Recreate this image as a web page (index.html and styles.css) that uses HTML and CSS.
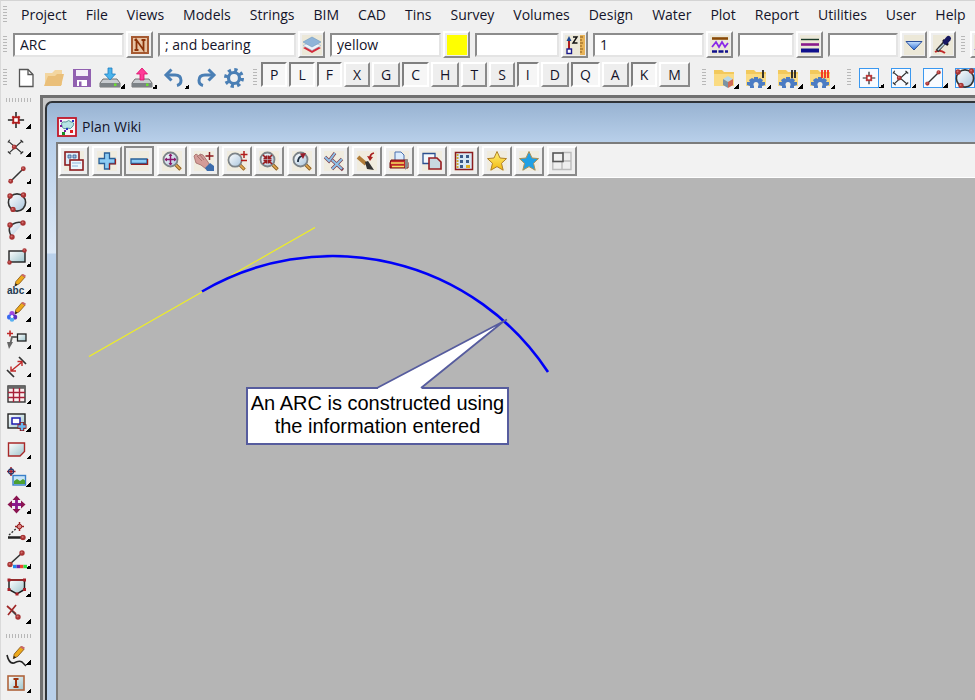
FILE: index.html
```html
<!DOCTYPE html>
<html lang="en">
<head>
<meta charset="utf-8">
<title>Plan Wiki</title>
<link rel="stylesheet" href="styles.css">
</head>
<body>
<svg class="defs" aria-hidden="true">
  <defs>
    <linearGradient id="glass" x1="0" y1="0" x2="1" y2="1"><stop offset="0" stop-color="#fff"/><stop offset="1" stop-color="#a8c4dc"/></linearGradient>
    <linearGradient id="teal" x1="0" y1="0" x2="1" y2="1"><stop offset="0" stop-color="#fff"/><stop offset="1" stop-color="#9cc4cc"/></linearGradient>
    <linearGradient id="gold" x1="0" y1="0" x2="0" y2="1"><stop offset="0" stop-color="#fff27a"/><stop offset="1" stop-color="#f2b80c"/></linearGradient>
    <linearGradient id="blue" x1="0" y1="0" x2="0" y2="1"><stop offset="0" stop-color="#c8e2ff"/><stop offset="1" stop-color="#2c6fd8"/></linearGradient>
    <symbol id="ball" viewBox="0 0 6 6"><circle cx="3" cy="3" r="2.700" fill="#a83434"/><circle cx="2.600" cy="2.400" r="1" fill="#d07070"/></symbol>
    <symbol id="lens" viewBox="0 0 20 20"><path d="M13 13l5.500 5.500" stroke="#8a5a20" stroke-width="3.400"/><path d="M13 13l5 5" stroke="#e0a850" stroke-width="1.700"/><circle cx="8.500" cy="8.500" r="7" fill="url(#glass)" stroke="#7c8388" stroke-width="1.800"/></symbol>
    <symbol id="folder" viewBox="0 0 20 20"><path d="M0 2h8l2 2h10v14H0z" fill="#f2c95c"/><path d="M0 6h20v12H0z" fill="#fadb82"/></symbol>
    <symbol id="cog" viewBox="0 0 20 20"><circle cx="10" cy="10" r="8" fill="none" stroke="currentColor" stroke-width="4" stroke-dasharray="3.142 3.141"/><circle cx="10" cy="10" r="5.500" fill="none" stroke="currentColor" stroke-width="3.200"/></symbol>
    <symbol id="foldercog" viewBox="0 0 20 20"><use href="#folder"/><path d="M1 17v-3h3l-1-2 3-2 2 1V9h4v2l2-1 3 2-1 2h3v3l-3 1v2h-4v-2q-2-3-4 0v2H4v-2z" fill="#4b7cc4"/><circle cx="10" cy="16.500" r="2.500" fill="#f4f0e4"/></symbol>
    <symbol id="star" viewBox="0 0 20 20"><path d="M10 .5l3 6.500 6.500.6-5 4.700 1.700 6.900L10 15.600l-6.200 3.600 1.700-6.900-5-4.700L7 7z"/></symbol>
    <symbol id="pencil" viewBox="0 0 20 20"><path d="M7 14l1-5 7-8 4 2.500-7 8z" fill="#eda91a" stroke="#8a5a18"/><path d="M14.500 1.500l1.500-2 4 2.500-1.500 2z" fill="#c86a6a"/><path d="M7 14.500l.6-3.500 2.600 1.600z" fill="#222"/></symbol>
    <symbol id="point" viewBox="0 0 20 20"><path d="M10 1v18M1 10h18" stroke="#222" stroke-width="1.700"/><path d="M6 8V6h2m4 0h2v2m0 4v2h-2m-4 0H6v-2" fill="none" stroke="#c22"/><rect x="7" y="7" width="6" height="6" fill="#fff" stroke="#b01c1c" stroke-width="2"/></symbol>
    <symbol id="crossing" viewBox="0 0 20 20"><path d="M2 4l15 13M3 16L17 3M1 5l2-3M15 2l3 3M1 15l3 3M15 18l3-3" fill="none" stroke="#333" stroke-width="1.300"/><use href="#ball" x="5" y="7" width="6" height="6"/></symbol>
    <symbol id="segment" viewBox="0 0 20 20"><path d="M3 17L17 3" stroke="#333" stroke-width="1.700"/><use href="#ball" x="0" y="14" width="6" height="6"/><use href="#ball" x="14" y="0" width="6" height="6"/></symbol>
    <symbol id="circle3" viewBox="0 0 20 20"><circle cx="10" cy="10.500" r="8.600" fill="url(#glass)" stroke="#333" stroke-width="1.600"/><use href="#ball" x="0" y="1" width="6" height="6"/><use href="#ball" x="13.500" y="0" width="6" height="6"/><use href="#ball" x="3" y="14.500" width="6" height="6"/></symbol>
  </defs>
</svg>

<header class="bars">
  <nav class="bar menu" aria-label="Main menu">
    <span class="grip"></span>
    <a href="#">Project</a><a href="#">File</a><a href="#">Views</a><a href="#">Models</a><a href="#">Strings</a><a href="#">BIM</a><a href="#">CAD</a><a href="#">Tins</a><a href="#">Survey</a><a href="#">Volumes</a><a href="#">Design</a><a href="#">Water</a><a href="#">Plot</a><a href="#">Report</a><a href="#">Utilities</a><a href="#">User</a><a href="#">Help</a>
  </nav>

  <div class="bar fields">
    <span class="grip"></span>
    <div class="field"><input class="w-l" type="text" value="ARC" aria-label="Name"><button class="raised" aria-label="Pick name"><svg viewBox="0 0 20 20"><rect x="2" y="2" width="16" height="16" fill="#e8c4a4" stroke="#a65a32" stroke-width="2"/><path d="M6.500 15V5l7 10V5M4.500 5H7M4.500 15h4M11.500 5h4" fill="none" stroke="#8c3208" stroke-width="1.800"/></svg></button></div>
    <div class="field"><input class="w-xl" type="text" value="; and bearing" aria-label="Model"><button class="raised" aria-label="Pick model"><svg viewBox="0 0 20 20"><rect width="20" height="20" fill="#ece8d8"/><path d="M1 13l9 5 9-5-9-4z" fill="#d42a3a"/><path d="M1 10.500l9 5 9-5-9-4z" fill="#eef4fa" stroke="#9ab4cc" stroke-width=".6"/><path d="M1 7l9 5 9-5-9-5z" fill="#8fb4d8" stroke="#6f98c0" stroke-width=".6"/></svg></button></div>
    <div class="field"><input class="w-l" type="text" value="yellow" aria-label="Colour"><button class="raised" aria-label="Pick colour"><span class="swatch"></span></button></div>
    <div class="field"><input class="w-m" type="text" aria-label="Height"><button class="raised" aria-label="Pick height"><svg viewBox="0 0 20 20"><rect width="20" height="20" fill="#ece8d8"/><path d="M4 15V4" stroke="#b01c1c" stroke-width="2"/><path d="M1.500 6L4 1l2.500 5z" fill="#234a90"/><rect x="2" y="14" width="4.500" height="4.500" fill="#fff" stroke="#1a1a8c" stroke-width="1.400"/><path d="M8 2h4L8 8h4.500" fill="none" stroke="#111" stroke-width="1.400"/><rect x="15" width="5" height="20" fill="#e8b45a"/><path d="M15 2h3M15 5h2M15 8h3M15 11h2M15 14h3M15 17h2" stroke="#8a5a18"/></svg></button></div>
    <div class="field"><input class="w-l" type="text" value="1" aria-label="Style"><button class="raised" aria-label="Pick style"><svg viewBox="0 0 20 20"><rect width="20" height="20" fill="#ece8d8"/><path d="M2 3.500h16" stroke="#8a4a08" stroke-width="2.600"/><path d="M2 12l4-5 3 5 3-5 3 5 3-4" fill="none" stroke="#8a2ae8" stroke-width="1.800"/><path d="M2 16.500h16" stroke="#10108c" stroke-width="2.600" stroke-dasharray="5 1.500"/></svg></button></div>
    <div class="field"><input class="w-xs" type="text" aria-label="Weight"><button class="raised" aria-label="Pick weight"><svg viewBox="0 0 20 20"><rect width="20" height="20" fill="#ece8d8"/><path d="M1 4.500h18" stroke="#1a3a2a" stroke-width="1.400"/><path d="M1 9.500h18" stroke="#8a1a8c" stroke-width="2.600"/><path d="M1 15.500h18" stroke="#10108c" stroke-width="4"/></svg></button></div>
    <div class="field"><input class="w-s" type="text" aria-label="Tinable"><button class="raised" aria-label="Choose"><svg viewBox="0 0 20 20"><rect width="20" height="20" fill="#ece8d8"/><path d="M2 6.500h16L10 15z" fill="url(#blue)" stroke="#2a4f9c"/></svg></button><button class="raised" aria-label="Sample"><svg viewBox="0 0 20 20"><rect width="20" height="20" fill="#ece8d8"/><path d="M2 17q5-3 10 1" fill="none" stroke="#c02828" stroke-width="2"/><path d="M4 16l8-9" stroke="#333" stroke-width="3.500"/><path d="M5 15l7-7" stroke="#b8d4e4" stroke-width="1.500"/><path d="M10 5l5 5" stroke="#111" stroke-width="2.500"/><path d="M12.500 7l3-3.500" stroke="#181860" stroke-width="5" stroke-linecap="round"/></svg></button></div>
    <span class="grip"></span>
    <button class="raised" aria-label="Cross section"><svg viewBox="0 0 20 20"><rect width="20" height="20" fill="#ece8d8"/><path d="M0 15L8 4l4 11z" fill="#8a74d8"/></svg></button>
  </div>

  <div class="bar actions">
    <span class="grip"></span>
    <div class="files">
      <button class="flat" aria-label="New"><svg viewBox="0 0 20 20"><path d="M3.500 1.500H12l5 5v12H3.500z" fill="#fff" stroke="#555" stroke-width="1.300"/><path d="M12 1.500v5h5" fill="none" stroke="#555" stroke-width="1.300"/></svg></button>
      <button class="flat" aria-label="Open"><svg viewBox="0 0 20 20"><path d="M1 17V5h7l3-3h7v15z" fill="#f3d6a0"/><path d="M0 18L4 8h7l2-2h7l-3 12z" fill="#eabf79"/></svg></button>
      <button class="flat" aria-label="Save"><svg viewBox="0 0 20 20"><path d="M1 1h18v18H1z" fill="#9160b0"/><path d="M4 2h12v6H4z" fill="#f4eef8"/><path d="M5 12h10v6H5z" fill="#fff"/><path d="M7 13.500h2.500V18H7z" fill="#9160b0"/></svg></button>
      <button class="flat more" aria-label="Import"><svg viewBox="0 0 20 20"><path d="M3 11h14l3 4v4H0v-4z" fill="#c8ccd0" stroke="#555" stroke-width=".8"/><path d="M0 15h20v4H0z" fill="#7c8286"/><path d="M14 15.500h2.500V18H14z" fill="#6ae030"/><path d="M8 0h4v6h3.500L10 12 4.500 6H8z" fill="#4ab4ec" stroke="#1c7cc0" stroke-width=".8"/></svg></button>
      <button class="flat more" aria-label="Export"><svg viewBox="0 0 20 20"><path d="M3 11h14l3 4v4H0v-4z" fill="#c8ccd0" stroke="#555" stroke-width=".8"/><path d="M0 15h20v4H0z" fill="#7c8286"/><path d="M14 15.500h2.500V18H14z" fill="#6ae030"/><path d="M8 12h4V6h3.500L10 0 4.500 6H8z" fill="#ff3c98" stroke="#d80c68" stroke-width=".8"/></svg></button>
      <button class="flat more" aria-label="Undo"><svg viewBox="0 0 20 20"><path d="M4 7h7q6 0 6 5.500 0 4-4 5" fill="none" stroke="#4a7fb5" stroke-width="3"/><path d="M7.500 1.500L2 7l5.500 5.500" fill="none" stroke="#4a7fb5" stroke-width="3"/></svg></button>
      <button class="flat" aria-label="Redo"><svg viewBox="0 0 20 20"><path d="M16 7H9q-6 0-6 5.500 0 4 4 5" fill="none" stroke="#4a7fb5" stroke-width="3"/><path d="M12.500 1.500L18 7l-5.500 5.500" fill="none" stroke="#4a7fb5" stroke-width="3"/></svg></button>
      <button class="flat gear" aria-label="Settings"><svg viewBox="0 0 20 20"><use href="#cog"/></svg></button>
    </div>
    <span class="grip"></span>
    <div class="snaps">
      <button class="snap on">P</button><button class="snap on">L</button><button class="snap on">F</button><button class="snap">X</button><button class="snap">G</button><button class="snap on">C</button><button class="snap">H</button><button class="snap">T</button><button class="snap">S</button><button class="snap on">I</button><button class="snap">D</button><button class="snap on">Q</button><button class="snap">A</button><button class="snap on">K</button><button class="snap">M</button>
    </div>
    <span class="grip"></span>
    <div class="group">
      <button class="flat more" aria-label="Library"><svg viewBox="0 0 20 20"><use href="#folder"/><path d="M9 11l5-3 5 3-5 3z" fill="#b8d8e8"/><path d="M9 11l5 3v6l-5-3z" fill="#7c94a4"/><path d="M19 11l-5 3v6l5-3z" fill="#d06a58"/></svg></button>
      <button class="flat more" aria-label="Macro one"><svg viewBox="0 0 20 20"><use href="#foldercog"/><path d="M17 2v8" stroke="#222" stroke-width="1.800"/></svg></button>
      <button class="flat more" aria-label="Macro two"><svg viewBox="0 0 20 20"><use href="#foldercog"/><path d="M14 2v8M17 2v8" stroke="#222" stroke-width="1.800"/></svg></button>
      <button class="flat more" aria-label="Macro three"><svg viewBox="0 0 20 20"><use href="#foldercog"/><path d="M12 2v8M15 2v8M18 2v8" stroke="#f03020" stroke-width="1.800"/></svg></button>
    </div>
    <span class="grip"></span>
    <div class="group boxed">
      <button class="flat more" aria-label="Point"><svg viewBox="0 0 20 20"><use href="#point" x="3" y="3" width="14" height="14"/></svg></button>
      <button class="flat more" aria-label="Intersection"><svg viewBox="0 0 20 20"><use href="#crossing" x="1" y="1" width="18" height="18"/></svg></button>
      <button class="flat more" aria-label="Line"><svg viewBox="0 0 20 20"><use href="#segment" x="2" y="2" width="16" height="16"/></svg></button>
      <button class="flat more" aria-label="Circle"><svg viewBox="0 0 20 20"><use href="#circle3"/></svg></button>
    </div>
  </div>
</header>

<div class="work">
  <aside class="side" aria-label="CAD tools">
    <span class="grip flatgrip"></span>
    <div class="tools">
      <button class="tool more" aria-label="Point"><svg viewBox="0 0 20 20"><use href="#point" x="0" y="1" width="18" height="18"/></svg></button>
      <button class="tool more" aria-label="Intersection"><svg viewBox="0 0 20 20"><use href="#crossing" x="0" y="1" width="18" height="18"/></svg></button>
      <button class="tool more" aria-label="Line"><svg viewBox="0 0 20 20"><use href="#segment" x="1" y="1" width="18" height="18"/></svg></button>
      <button class="tool more" aria-label="Circle"><svg viewBox="0 0 20 20"><use href="#circle3"/></svg></button>
      <button class="tool more" aria-label="Arc"><svg viewBox="0 0 20 20"><path d="M5 17Q-1 8 6 4q5-3 10-1L6 15z" fill="url(#glass)"/><path d="M5 17Q-1 8 6 4q5-3 10-1" fill="none" stroke="#333" stroke-width="1.500"/><use href="#ball" x="13" y="0" width="6" height="6"/><use href="#ball" x="0" y="2" width="6" height="6"/><use href="#ball" x="2" y="14" width="6" height="6"/></svg></button>
      <button class="tool more" aria-label="Rectangle"><svg viewBox="0 0 20 20"><rect x="2" y="4" width="16" height="11" fill="url(#teal)" stroke="#222" stroke-width="1.400"/><use href="#ball" x="15" y="1" width="5" height="5"/><use href="#ball" x="0" y="13" width="5" height="5"/></svg></button>
      <button class="tool more" aria-label="Text"><svg viewBox="0 0 20 20"><use href="#pencil" x="2" y="-1" width="17" height="17"/><text x="0" y="19" class="abc">abc</text></svg></button>
      <button class="tool more" aria-label="Symbol"><svg viewBox="0 0 20 20"><use href="#pencil" x="2" y="0" width="17" height="17"/><circle cx="5" cy="11.500" r="2.600" fill="#a04ae0"/><circle cx="2.600" cy="15" r="2.600" fill="#3a6af0"/><circle cx="7.600" cy="15" r="2.600" fill="#5a30c0"/><circle cx="5" cy="17.500" r="2.300" fill="#58b0f0"/><circle cx="5" cy="14.500" r="1.500" fill="#fff"/></svg></button>
      <button class="tool more" aria-label="Leader"><svg viewBox="0 0 20 20"><path d="M0 3.500h6M3 .5v6" stroke="#c02828" stroke-width="1.600"/><rect x="10.500" y="4" width="8.500" height="7" fill="url(#teal)" stroke="#222" stroke-width="1.300"/><path d="M10 7H5L3 15" fill="none" stroke="#666" stroke-width="1.800"/><path d="M0 12h6l-4 7z" fill="#666"/></svg></button>
      <button class="tool more" aria-label="Dimension"><svg viewBox="0 0 20 20"><path d="M0 13l7 7M12 0l7 7" stroke="#333" stroke-width="1.700"/><path d="M4 14L15 5M4 9.500V14h5M10.500 4.500H15V9" fill="none" stroke="#c02828" stroke-width="1.400"/></svg></button>
      <button class="tool more" aria-label="Table"><svg viewBox="0 0 20 20"><rect x="1" y="1" width="17" height="16" fill="#fbeeee" stroke="#333" stroke-width="1.400"/><path d="M1 2.500h17" stroke="#666" stroke-width="2.600"/><path d="M6.500 3v14M12.500 3v14M1 7.500h17M1 12.500h17" stroke="#a82038" stroke-width="1.400"/></svg></button>
      <button class="tool more" aria-label="Insert view"><svg viewBox="0 0 20 20"><rect x="1" y="2" width="17" height="14" fill="url(#teal)" stroke="#222" stroke-width="1.400"/><rect x="5" y="6" width="8" height="6" fill="#fff" stroke="#1c1cb0" stroke-width="1.500"/><path d="M15 10v9M10.500 14.500h9" stroke="#8c1c20" stroke-width="4.500"/><path d="M15 10.800v7.400M11.300 14.500h7.400" stroke="#6ab8f0" stroke-width="2.400"/></svg></button>
      <button class="tool more" aria-label="Polygon"><svg viewBox="0 0 20 20"><path d="M1.500 3h16v8.500L13 16H1.500z" fill="url(#teal)" stroke="#a82828" stroke-width="1.400"/></svg></button>
      <button class="tool more" aria-label="Image"><svg viewBox="0 0 20 20"><path d="M4 0v9M0 4.500h8.500" stroke="#a81c28" stroke-width="1.500"/><circle cx="4" cy="4.500" r="2.500" fill="none" stroke="#28386c" stroke-width="1.300"/><rect x="6" y="8.500" width="12.500" height="9.500" fill="#c8e4f8" stroke="#3a80c8" stroke-width="1.400"/><path d="M7 17v-3l3-2 3 2 3-2 2 1.500V17z" fill="#4ca030"/></svg></button>
      <button class="tool more" aria-label="Move"><svg viewBox="0 0 20 20"><path d="M9.500 3v13M3 9.500h13" stroke="#8a188c" stroke-width="2.800"/><path d="M5.500 5L9.500.5l4 4.500zM5.500 14l4 4.500 4-4.500zM5 5.500L.5 9.500l4.500 4zM14 5.500l4.500 4-4.500 4z" fill="#8a1450"/></svg></button>
      <button class="tool more" aria-label="Angle"><svg viewBox="0 0 20 20"><path d="M1 15.500h15" stroke="#222" stroke-width="2.500"/><path d="M2 13L11 5" stroke="#333" stroke-width="1.400" stroke-dasharray="2 1.500"/><path d="M12.500 0v9M8 4.500h9" stroke="#982020" stroke-width="1.500"/><circle cx="12.500" cy="4.500" r="2.300" fill="#d88" stroke="#982020"/><use href="#ball" x="13" y="12.500" width="6" height="6"/></svg></button>
      <button class="tool more" aria-label="Line colour"><svg viewBox="0 0 20 20"><path d="M3 14L15 3" stroke="#333" stroke-width="1.600"/><use href="#ball" x="12" y="0" width="6" height="6"/><use href="#ball" x="0" y="11.500" width="6" height="6"/><path d="M6 16.500h3.500" stroke="#1c8cf0" stroke-width="3.400"/><path d="M9.500 16.500h3.500" stroke="#6c20a8" stroke-width="3.400"/><path d="M13 16.500h3.500" stroke="#f04030" stroke-width="3.400"/><path d="M16.500 16.500H20" stroke="#30e040" stroke-width="3.400"/></svg></button>
      <button class="tool more" aria-label="Polyline"><svg viewBox="0 0 20 20"><path d="M2 3h15.500v9.500L10 17l-8-4.500z" fill="url(#teal)" stroke="#222" stroke-width="1.500"/><path d="M2 3h15.500" stroke="#a82020" stroke-width="1.500"/><path d="M.5 1.500h3v3h-3zM16 1.500h3v3h-3zM.5 11h3v3h-3zM16 11h3v3h-3zM8.500 15.500h3v3h-3z" fill="#a82028"/></svg></button>
      <button class="tool more" aria-label="Delete point"><svg viewBox="0 0 20 20"><path d="M0 1l9 8M9 0L1 10" stroke="#a02828" stroke-width="1.700"/><path d="M5 6l6 6" stroke="#444" stroke-width="1.200"/><use href="#ball" x="8" y="9" width="6" height="6"/></svg></button>
    </div>
    <span class="grip flatgrip"></span>
    <div class="tools">
      <button class="tool more" aria-label="Sketch"><svg viewBox="0 0 20 20"><use href="#pencil" x="0" y="0" width="18" height="18"/><path d="M0 9q2 9 7 8 5-3 8-1l4 4" fill="none" stroke="#222" stroke-width="1.600"/></svg></button>
      <button class="tool more" aria-label="Insert"><svg viewBox="0 0 20 20"><rect x="1" y="3" width="16" height="14" fill="url(#teal)" stroke="#b0643c" stroke-width="1.600"/><path d="M9 6v8M6.500 6h5M6.500 14h5" stroke="#9c3410" stroke-width="2"/></svg></button>
    </div>
  </aside>

  <main class="mdi">
    <section class="window">
      <div class="title">
        <svg viewBox="0 0 20 20"><rect x="1" y="1" width="18" height="18" fill="#f8f4f8" stroke="#c01828" stroke-width="1.800"/><path d="M5 9q-2-5 4-4 3-3 5 0 4 0 2 4-2 4-6 2-4 2-5-2z" fill="#b8e4e4" stroke="#58989c"/><path d="M3 3h2v2H3zM3 8h2v2H3zM7 13h2v2H7z" fill="#7c1c9c"/><path d="M5 15h3v3H5z" fill="#189028"/><path d="M13 13h3v3h-3z" fill="#e02020"/><path d="M15 3h2v2h-2zM9 11h2v2H9z" fill="#2838c0"/></svg>
        <h1>Plan Wiki</h1>
      </div>
      <div class="pane">
        <div class="viewbar">
          <button class="raised" aria-label="View menu"><svg viewBox="0 0 20 20"><rect x="1" y="1" width="14" height="13" fill="#dcecf8" stroke="#8c1c20" stroke-width="1.600"/><path d="M4 4h3v3H4zM9 4h3v3H9z" fill="#9cc0e0" stroke="#3a5a90" stroke-width=".8"/><rect x="6" y="9" width="13" height="10" fill="#eef6fc" stroke="#8c1c20" stroke-width="1.600"/><path d="M8 12h9M8 15h6" stroke="#8cb4dc"/></svg></button>
          <button class="raised" aria-label="Add model"><svg viewBox="0 0 20 20"><path d="M7.500 2h5v5.500H18v5h-5.500V18h-5v-5.500H2v-5h5.500z" fill="#8cccf4" stroke="#2a6098" stroke-width="1.300"/><path d="M12.500 18.500v-5.500H18.500V8" fill="none" stroke="#982020" stroke-width="1.200"/></svg></button>
          <button class="raised current" aria-label="Remove model"><svg viewBox="0 0 20 20"><path d="M2 8h16v4.500H2z" fill="#8cccf4" stroke="#2a6098" stroke-width="1.300"/><path d="M2 13.300h16.600V8" fill="none" stroke="#982020" stroke-width="1.200"/></svg></button>
          <button class="raised" aria-label="Fit"><svg viewBox="0 0 20 20"><use href="#lens"/><path d="M8.500 3v11M3 8.500h11" stroke="#8a186c" stroke-width="1.500"/><path d="M6.500 5l2-2.500 2 2.500zM6.500 12l2 2.500 2-2.500zM5 6.500L2.500 8.500l2.500 2zM12 6.500l2.500 2-2.500 2z" fill="#8a186c"/></svg></button>
          <button class="raised" aria-label="Pan"><svg viewBox="0 0 20 20"><path d="M0 5l2-2 3 2 1-2 3 1 5 7 2 4-4 3-5-4-5-2z" fill="#d49c98" stroke="#a06864" stroke-width=".8"/><path d="M3 5l5 5M6 4l4 5" stroke="#a06864" stroke-width=".8"/><path d="M11 17l5-5 4 3v5h-7z" fill="#3c6cac"/><path d="M15.500 1v8M11.500 5h8" stroke="#8c1c20" stroke-width="1.500"/></svg></button>
          <button class="raised" aria-label="Zoom"><svg viewBox="0 0 20 20"><use href="#lens" x="0" y="1" width="19" height="19"/><path d="M17 0v7M13.500 3.500h7M14 9.500h6" stroke="#b01c1c" stroke-width="1.500"/></svg></button>
          <button class="raised" aria-label="Zoom in"><svg viewBox="0 0 20 20"><use href="#lens"/><path d="M4.500 7.500h3v-3M12.500 7.500h-3v-3M4.500 9.500h3v3M12.500 9.500h-3v3M4 4l3 3M13 4l-3 3M4 13l3-3M13 13l-3-3" fill="none" stroke="#981c20" stroke-width="1.600"/></svg></button>
          <button class="raised" aria-label="Previous zoom"><svg viewBox="0 0 20 20"><use href="#lens"/><path d="M6 11q0-5 4-6" fill="none" stroke="#234" stroke-width="1.800"/><path d="M8 2.500l6-.5-3 6z" fill="#98202c"/></svg></button>
          <button class="raised" aria-label="Toggle"><svg viewBox="0 0 20 20"><path d="M1 6l4 4 6-8M8 9l11 10M18 8L8 18" fill="none" stroke="#7c3848" stroke-width="3.200"/><path d="M1 6l4 4 6-8M8 9l10 9M18 8L8 18" fill="none" stroke="#8cc0e8" stroke-width="2"/></svg></button>
          <button class="raised" aria-label="Redraw"><svg viewBox="0 0 20 20"><path d="M1 6l8 7" stroke="#b07c38" stroke-width="4"/><path d="M8 11l3-1 6 9-7-1z" fill="#333"/><path d="M17 2q-4 1-4 5" fill="none" stroke="#a82020" stroke-width="1.800"/><path d="M10 5l3 5 3-4z" fill="#a82020"/></svg></button>
          <button class="raised" aria-label="Plot"><svg viewBox="0 0 20 20"><path d="M6 1h6l3 3v7H6z" fill="#dcecfc" stroke="#4a70b0"/><path d="M2 9h16l1 3v5H1v-5z" fill="#c02828" stroke="#701010"/><path d="M2 12h13M3 15.500h12" stroke="#f4e060" stroke-width="1.500"/><path d="M16 9l3-1v8l-3 3z" fill="#888"/></svg></button>
          <button class="raised" aria-label="Clone"><svg viewBox="0 0 20 20"><path d="M1 2.500h12v10H1z" fill="#f2f8fc" stroke="#2c5090" stroke-width="1.300"/><path d="M7 7h8l4 4v7H7z" fill="#c8d8e0" stroke="#981c20" stroke-width="1.600"/></svg></button>
          <button class="raised" aria-label="Grid"><svg viewBox="0 0 20 20"><rect x="1.500" y="1.500" width="17" height="17" fill="#d8e8f4" stroke="#8c1c20" stroke-width="1.500"/><path d="M3.500 3v14" stroke="#d0a830" stroke-width="2" stroke-dasharray="2 1"/><path d="M6 4h3v3H6zM12 4h3v3h-3zM6 9h3v3H6zM12 9h3v3h-3zM6 14h3v3H6z" fill="#3a5a88"/><path d="M12 14h4v3h-4z" fill="#e0b020"/></svg></button>
          <button class="raised" aria-label="Favourites"><svg viewBox="0 0 20 20" fill="url(#gold)" stroke="#b08028" stroke-width="1"><use href="#star"/></svg></button>
          <button class="raised" aria-label="Shared favourites"><svg viewBox="0 0 20 20" fill="#20a0e4" stroke="#a89058" stroke-width="1"><use href="#star"/></svg></button>
          <button class="raised plain" aria-label="Layout"><svg viewBox="0 0 20 20"><path d="M10 1.500h9v17H.8V10M10 10v8.500M.8 10H19" fill="none" stroke="#bbb" stroke-width="1.400"/><rect x="1" y="2" width="10" height="8.500" fill="#f0f0f0" stroke="#555" stroke-width="1.600"/></svg></button>
        </div>
        <div class="canvas">
          <svg class="drawing" aria-hidden="true">
            <g transform="translate(-58 -178)" fill="none">
              <path d="M89 356.500L315 227.500" stroke="#f0f020" stroke-width="1.200"/>
              <path d="M202 291.500A258 258 0 0 1 548 372" stroke="#0000f8" stroke-width="2.600"/>
            </g>
          </svg>
          <p class="callout">An ARC is constructed using the information entered</p>
          <svg class="drawing" aria-hidden="true">
            <g transform="translate(-58 -178)">
              <path d="M378 389.500V387.500L504 321 422 387.500V389.500z" fill="#fff"/>
              <path d="M377 388L507 319.500M504 321L421 388" fill="none" stroke="#565c9e" stroke-width="1.800"/>
            </g>
          </svg>
        </div>
      </div>
    </section>
  </main>
</div>
</body>
</html>
```
FILE: styles.css
```css
* { box-sizing: border-box; }

body {
  margin: 0;
  height: 100vh;
  display: flex;
  flex-direction: column;
  overflow: hidden;
  background: #f0f0f0;
  border-top: 1px solid #d4d4d4;
  border-left: 1px solid #dadada;
  color: #14142a;
  font: 14px/20px "Open Sans", "Noto Sans", sans-serif;
}

button {
  flex: none;
  padding: 0;
  border: 0;
  background: none;
  color: inherit;
  font: inherit;
}

svg { display: block; overflow: visible; }
.defs { position: absolute; width: 0; height: 0; }
button svg { width: 20px; height: 20px; }

/* Toolbars */
.bars { flex: none; }
.bar { display: flex; align-items: center; overflow: hidden; }

.grip {
  flex: none;
  width: 4px;
  height: 18px;
  background: repeating-linear-gradient(#b8b8b8 0 1px, #f0f0f0 1px 3px);
}

.menu { height: 28px; padding-left: 2px; }
.menu a {
  flex: none;
  margin-left: 19px;
  color: inherit;
  text-decoration: none;
}
.menu .grip + a { margin-left: 14px; }

.fields { height: 31px; gap: 5px; padding-left: 2px; }
.fields .grip { margin-right: 1px; }
.fields .grip:last-of-type { margin-right: 0; }
.field { display: flex; flex: none; align-items: center; gap: 2px; }
.field input {
  height: 24px;
  padding: 0 4px 0 5px;
  border: 2px solid #8c8c8c;
  border-right-color: #e4e4e4;
  border-bottom-color: #e4e4e4;
  border-radius: 0;
  background: #fff;
  color: inherit;
  font: inherit;
}
.w-xs { width: 56px; }
.w-s { width: 70px; }
.w-m { width: 84px; }
.w-l { width: 111px; }
.w-xl { width: 138px; }

.raised {
  display: grid;
  place-items: center;
  width: 27px;
  height: 27px;
  border: 2px solid #fff;
  border-right-color: #8a8a8a;
  border-bottom-color: #8a8a8a;
  background: #eee;
}
.swatch { width: 20px; height: 20px; background: #ff0; }

.actions { height: 35px; padding-left: 2px; }
.files { display: flex; gap: 8px; margin: 0 9px; }
.flat { width: 20px; height: 22px; display: grid; place-items: center; }
.files .more { margin-right: 4px; }
.gear { color: #4a7fb5; }

/* Corner mark of a button that opens a fly-out */
.more { position: relative; }
.more::after {
  content: "";
  position: absolute;
  right: -5px;
  bottom: 0;
  width: 5px;
  height: 5px;
  background: linear-gradient(135deg, transparent 50%, #000 50%);
}

.snaps { display: flex; gap: 2px; margin: 0 12px 6px 4px; }
.snap {
  height: 25px;
  padding: 0 7px;
  border: 2px solid #fff;
  border-right-color: #8a8a8a;
  border-bottom-color: #8a8a8a;
  background: #eee;
}
.snap.on {
  border-color: #808080 #fff #fff #808080;
  background: #f6f6f6;
}

.group { display: flex; gap: 12px; margin: 0 17px 0 8px; }
.boxed .flat { height: 20px; }
.boxed svg { background: #f8fbff; box-shadow: inset 0 0 0 1px #3a98f0; }

/* Work area */
.work { flex: 1; display: flex; min-height: 0; }
.side {
  flex: none;
  width: 39px;
  padding: 3px 0 0 5px;
}
.flatgrip {
  display: block;
  width: 25px;
  height: 4px;
  background: repeating-linear-gradient(90deg, #b8b8b8 0 1px, #f0f0f0 1px 3px);
}
.tools {
  display: grid;
  grid-auto-rows: 27px 28px;
  padding: 4px 0 6px;
}
.tool { width: 21px; padding-left: 1px; display: grid; align-items: center; }
.tool.more::after { right: -4px; bottom: 4px; }
.abc { font: bold 10px "Liberation Sans", sans-serif; fill: #223a50; }

.mdi {
  flex: 1;
  min-width: 0;
  display: flex;
  border: solid #707070;
  border-width: 3px 0 0 3px;
  background: #c8c8c8;
  padding: 3px 0 0 2px;
}
.window {
  flex: 1;
  min-width: 0;
  display: flex;
  flex-direction: column;
  padding-left: 9px;
  border: solid #303438;
  border-width: 2px 0 0 2px;
  border-top-left-radius: 7px;
  background: linear-gradient(#98b3d2, #b9d0ea 40px, #dce8f6 150px, #b9d0ea 151px);
}
.title { flex: none; display: flex; align-items: center; gap: 5px; height: 39px; padding: 9px 0 0 1px; }
.title svg { width: 20px; height: 20px; }
.title h1 { margin: 0; font: inherit; }
.pane {
  flex: 1;
  min-height: 0;
  display: flex;
  flex-direction: column;
  border: solid #7c7c7c;
  border-width: 2px 0 0 2px;
}
.viewbar {
  flex: none;
  display: grid;
  grid-template-columns: repeat(8, 33px 32px);
  align-items: center;
  height: 34px;
  padding-left: 1px;
  background: #f2f2f2;
  border-bottom: 1px solid #fff;
}
.viewbar .raised { width: 30px; height: 30px; }
.viewbar .raised svg { background: #f0ecdf; }
.viewbar .plain svg { background: none; }
.viewbar .current { border-color: #8a8a8a; }

.canvas { position: relative; flex: 1; overflow: hidden; background: #b5b5b5; }
.drawing { position: absolute; left: 0; top: 0; width: 100%; height: 100%; }
.callout {
  position: absolute;
  left: 188px;
  top: 209px;
  width: 263px;
  margin: 0;
  padding: 3px 0 5px;
  border: 2px solid #565c9e;
  background: #fff;
  color: #000;
  text-align: center;
  font: 20px/23px "Liberation Sans", sans-serif;
}
```
